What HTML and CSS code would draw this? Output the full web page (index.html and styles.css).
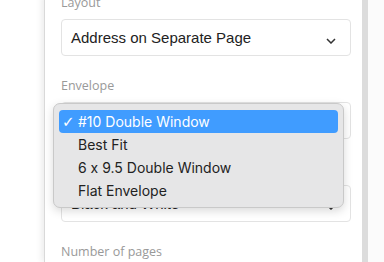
FILE: index.html
```html
<!DOCTYPE html>
<html lang="en">
<head>
    <meta charset="UTF-8">
    <meta name="viewport" content="width=device-width, initial-scale=1.0">
    <title>Mail Settings</title>
    <link rel="stylesheet" href="styles.css">
</head>
<body>

<div class="gutter"></div>

<div class="panel">
    <div class="field">
        <label>Layout</label>
        <div class="select">
            <span>Address on Separate Page</span>
            <svg class="chevron" width="10" height="6" viewBox="0 0 10 6"><path d="M1 1l4 4 4-4" fill="none" stroke="#333" stroke-width="1.5"/></svg>
        </div>
    </div>

    <div class="field envelope">
        <label>Envelope</label>
        <div class="select">
            <span>#10 Double Window</span>
            <svg class="chevron" width="10" height="6" viewBox="0 0 10 6"><path d="M1 1l4 4 4-4" fill="none" stroke="#333" stroke-width="1.5"/></svg>
        </div>

        <!-- native select popup, open -->
        <ul class="menu">
            <li class="active"><span class="check">&#10003;</span>#10 Double Window</li>
            <li><span class="check"></span>Best Fit</li>
            <li><span class="check"></span>6 x 9.5 Double Window</li>
            <li><span class="check"></span>Flat Envelope</li>
        </ul>
    </div>

    <div class="field">
        <label>Color</label>
        <div class="select">
            <span>Black and White</span>
            <svg class="chevron" width="10" height="6" viewBox="0 0 10 6"><path d="M1 1l4 4 4-4" fill="none" stroke="#333" stroke-width="1.5"/></svg>
        </div>
    </div>

    <div class="field">
        <label>Number of pages</label>
    </div>
</div>

<div class="scrollbar"></div>
<div class="outside"></div>

</body>
</html>
```

FILE: styles.css
```css
body {
    margin: 0;
    height: 262px;
    overflow: hidden;
    display: flex;
    background-color: #fff;
    font-family: "Liberation Sans", Arial, sans-serif;
}

.gutter {
    width: 44px;
    flex-shrink: 0;
}

.panel {
    width: 318px;
    flex-shrink: 0;
    border-left: 1px solid #d9d9d9;
    box-shadow: -3px 0 6px rgba(0, 0, 0, 0.07);
    padding: 0 11px 0 16px;
    margin-top: -5px;
    box-sizing: border-box;
}

.scrollbar {
    width: 6px;
    flex-shrink: 0;
    background-color: #dcdcdc;
}

.outside {
    flex: 1;
    background-color: #fbfbfb;
}

.field {
    margin-bottom: 22px;
    position: relative;
}

.field label {
    display: block;
    font-family: "Open Sans", "Noto Sans", sans-serif;
    font-size: 12.5px;
    line-height: 16px;
    color: #999;
    margin-bottom: 8px;
}

.select {
    height: 37px;
    border: 1px solid #e3e3e3;
    border-radius: 4px;
    box-sizing: border-box;
    display: flex;
    align-items: center;
    justify-content: space-between;
    padding: 0 14px 0 9px;
    font-size: 15px;
    color: #222;
}

.chevron {
    margin-top: 7px;
}

.envelope {
    z-index: 2;
}

.menu {
    position: absolute;
    left: -8px;
    top: 25px;
    width: 291px;
    margin: 0;
    padding: 6px 5px 5px;
    box-sizing: border-box;
    list-style: none;
    background-color: #e6e6e7;
    border: 1px solid #c9c9c9;
    border-radius: 7px;
    box-shadow: 0 3px 10px rgba(0, 0, 0, 0.15);
    font-family: Inter, "Noto Sans", sans-serif;
    font-feature-settings: "calt" 0;
    font-weight: 400;
    font-size: 14px;
    color: #222;
}

.menu li {
    height: 23px;
    display: flex;
    align-items: center;
    padding-left: 3px;
    border-radius: 4px;
}

.menu li.active {
    background-color: #409cff;
    color: #fff;
}

.check {
    width: 16px;
    font-size: 15px;
    font-family: "DejaVu Sans", sans-serif;
}
```
